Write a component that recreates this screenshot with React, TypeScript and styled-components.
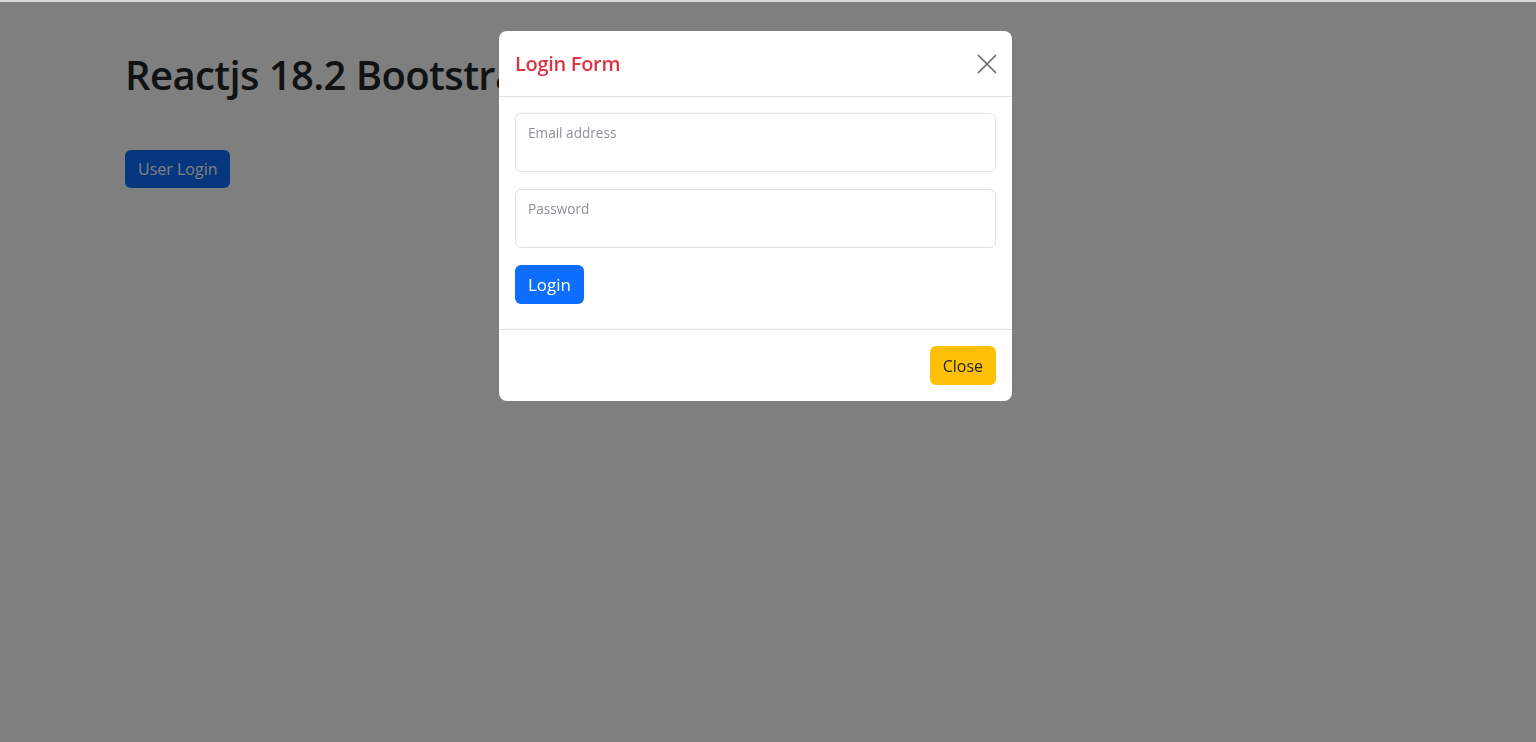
import React, { ReactElement } from "react";
import styled, { createGlobalStyle } from "styled-components";

const GlobalStyle = createGlobalStyle`
  * { box-sizing: border-box; }
  html, body {
    margin: 0;
    padding: 0;
    background: #fff;
    font-family: "Segoe UI", "Open Sans", "Noto Sans", sans-serif;
    color: #212529;
  }
  body {
    border-top: 2px solid #d9d9d9;
  }
`;

const Page = styled.div`
  padding: 49px 0 0 125px;
  min-height: 740px;
`;

const Title = styled.h1`
  margin: 0 0 51px 0;
  font-size: 40px;
  font-weight: 600;
  line-height: 1.2;
  letter-spacing: -0.6px;
`;

const Button = styled.button<{ $variant: "primary" | "warning"; $size?: number; $h?: number }>`
  display: inline-flex;
  align-items: center;
  justify-content: center;
  height: ${(p) => p.$h ?? 38}px;
  padding: 0 13px;
  border: 0;
  border-radius: 6px;
  font-family: inherit;
  font-size: ${(p) => p.$size ?? 16}px;
  line-height: 1.5;
  cursor: pointer;
  background: ${(p) => (p.$variant === "primary" ? "#0d6efd" : "#ffc107")};
  color: ${(p) => (p.$variant === "primary" ? "#fff" : "#212529")};
`;

const Backdrop = styled.div`
  position: fixed;
  left: 0;
  right: 0;
  bottom: 0;
  top: 2px;
  background: rgba(0, 0, 0, 0.5);
`;

const Dialog = styled.div`
  position: fixed;
  top: 31px;
  left: 499px;
  width: 513px;
  background: #fff;
  border-radius: 8px;
  overflow: hidden;
`;

const Header = styled.div`
  display: flex;
  align-items: center;
  justify-content: space-between;
  height: 66px;
  padding: 0 15px 0 16px;
  border-bottom: 1px solid #dee2e6;
`;

const HeaderTitle = styled.h5`
  margin: 0;
  font-size: 20px;
  font-weight: 600;
  color: #dc3545;
  line-height: 1.5;
  letter-spacing: -0.3px;
`;

const CloseX = styled.button`
  display: flex;
  align-items: center;
  justify-content: center;
  width: 20px;
  height: 20px;
  padding: 0;
  border: 0;
  background: transparent;
  cursor: pointer;
`;

const Body = styled.div`
  padding: 16px 16px 25px 16px;
  display: flex;
  flex-direction: column;
  gap: 17px;
`;

const Field = styled.div`
  position: relative;
  height: 59px;
  border: 1px solid #dee2e6;
  border-radius: 6px;
`;

const FieldLabel = styled.label`
  position: absolute;
  top: 9px;
  left: 12px;
  font-size: 13.6px;
  color: #8c9196;
  line-height: 1.5;
`;

const FieldInput = styled.input`
  width: 100%;
  height: 100%;
  border: 0;
  background: transparent;
  padding: 26px 12px 6px;
  font-family: inherit;
  font-size: 16px;
  outline: none;
`;

const Footer = styled.div`
  display: flex;
  justify-content: flex-end;
  padding: 16px;
  border-top: 1px solid #dee2e6;
`;

const App = (): ReactElement => {
  return (
    <>
      <GlobalStyle />
      <Page>
        <Title>Reactjs 18.2 Bootstrap Modal</Title>
        <Button $variant="primary">User Login</Button>
      </Page>
      <Backdrop />
      <Dialog>
        <Header>
          <HeaderTitle>Login Form</HeaderTitle>
          <CloseX aria-label="Close">
            <svg width="20" height="20" viewBox="0 0 20 20">
              <path
                d="M1.5 1.5 L18.5 18.5 M18.5 1.5 L1.5 18.5"
                stroke="#6b6b6b"
                strokeWidth="1.7"
                strokeLinecap="round"
              />
            </svg>
          </CloseX>
        </Header>
        <Body>
          <Field>
            <FieldLabel>Email address</FieldLabel>
            <FieldInput type="email" />
          </Field>
          <Field>
            <FieldLabel>Password</FieldLabel>
            <FieldInput type="password" />
          </Field>
          <div>
            <Button $variant="primary" $size={17} $h={39}>
              Login
            </Button>
          </div>
        </Body>
        <Footer>
          <Button $variant="warning" $h={39}>
            Close
          </Button>
        </Footer>
      </Dialog>
    </>
  );
};

export default App;
